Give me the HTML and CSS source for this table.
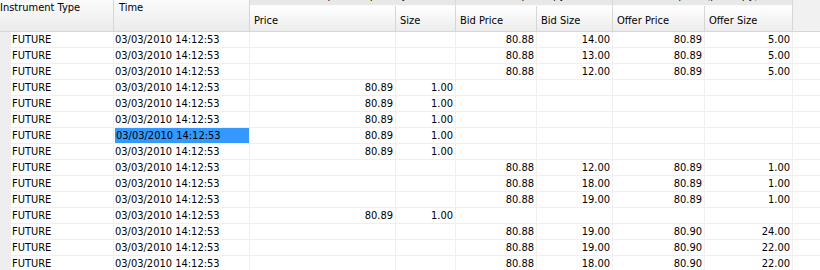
FILE: index.html
```html
<!DOCTYPE html>
<html>
<head>
<meta charset="utf-8">
<link rel="stylesheet" href="styles.css">
</head>
<body>
<div class="table">
  <div class="head">
    <div class="hm h-inst">Instrument Type</div>
    <div class="hm h-time">Time</div>
    <div class="grp g-trade"><span>Trade price &amp; quantity</span></div>
    <div class="grp g-bid"><span>Bid price/qty</span></div>
    <div class="grp g-offer"><span>Offer quote (price/qty)</span></div>
    <div class="sub s1">Price</div>
    <div class="sub s2">Size</div>
    <div class="sub s3">Bid Price</div>
    <div class="sub s4">Bid Size</div>
    <div class="sub s5">Offer Price</div>
    <div class="sub s6">Offer Size</div>
    <div class="hfill"></div>
  </div>
  <div class="body">
    <div class="gut"></div><div class="c">FUTURE</div><div class="c">03/03/2010 14:12:53</div><div class="c n"></div><div class="c n"></div><div class="c n">80.88</div><div class="c n">14.00</div><div class="c n">80.89</div><div class="c n">5.00</div><div class="fill"></div>
    <div class="gut"></div><div class="c">FUTURE</div><div class="c">03/03/2010 14:12:53</div><div class="c n"></div><div class="c n"></div><div class="c n">80.88</div><div class="c n">13.00</div><div class="c n">80.89</div><div class="c n">5.00</div><div class="fill"></div>
    <div class="gut"></div><div class="c">FUTURE</div><div class="c">03/03/2010 14:12:53</div><div class="c n"></div><div class="c n"></div><div class="c n">80.88</div><div class="c n">12.00</div><div class="c n">80.89</div><div class="c n">5.00</div><div class="fill"></div>
    <div class="gut"></div><div class="c">FUTURE</div><div class="c">03/03/2010 14:12:53</div><div class="c n">80.89</div><div class="c n">1.00</div><div class="c n"></div><div class="c n"></div><div class="c n"></div><div class="c n"></div><div class="fill"></div>
    <div class="gut"></div><div class="c">FUTURE</div><div class="c">03/03/2010 14:12:53</div><div class="c n">80.89</div><div class="c n">1.00</div><div class="c n"></div><div class="c n"></div><div class="c n"></div><div class="c n"></div><div class="fill"></div>
    <div class="gut"></div><div class="c">FUTURE</div><div class="c">03/03/2010 14:12:53</div><div class="c n">80.89</div><div class="c n">1.00</div><div class="c n"></div><div class="c n"></div><div class="c n"></div><div class="c n"></div><div class="fill"></div>
    <div class="gut"></div><div class="c">FUTURE</div><div class="c sel"><span class="selbox">03/03/2010 14:12:53</span></div><div class="c n">80.89</div><div class="c n">1.00</div><div class="c n"></div><div class="c n"></div><div class="c n"></div><div class="c n"></div><div class="fill"></div>
    <div class="gut"></div><div class="c">FUTURE</div><div class="c">03/03/2010 14:12:53</div><div class="c n">80.89</div><div class="c n">1.00</div><div class="c n"></div><div class="c n"></div><div class="c n"></div><div class="c n"></div><div class="fill"></div>
    <div class="gut"></div><div class="c">FUTURE</div><div class="c">03/03/2010 14:12:53</div><div class="c n"></div><div class="c n"></div><div class="c n">80.88</div><div class="c n">12.00</div><div class="c n">80.89</div><div class="c n">1.00</div><div class="fill"></div>
    <div class="gut"></div><div class="c">FUTURE</div><div class="c">03/03/2010 14:12:53</div><div class="c n"></div><div class="c n"></div><div class="c n">80.88</div><div class="c n">18.00</div><div class="c n">80.89</div><div class="c n">1.00</div><div class="fill"></div>
    <div class="gut"></div><div class="c">FUTURE</div><div class="c">03/03/2010 14:12:53</div><div class="c n"></div><div class="c n"></div><div class="c n">80.88</div><div class="c n">19.00</div><div class="c n">80.89</div><div class="c n">1.00</div><div class="fill"></div>
    <div class="gut"></div><div class="c">FUTURE</div><div class="c">03/03/2010 14:12:53</div><div class="c n">80.89</div><div class="c n">1.00</div><div class="c n"></div><div class="c n"></div><div class="c n"></div><div class="c n"></div><div class="fill"></div>
    <div class="gut"></div><div class="c">FUTURE</div><div class="c">03/03/2010 14:12:53</div><div class="c n"></div><div class="c n"></div><div class="c n">80.88</div><div class="c n">19.00</div><div class="c n">80.90</div><div class="c n">24.00</div><div class="fill"></div>
    <div class="gut"></div><div class="c">FUTURE</div><div class="c">03/03/2010 14:12:53</div><div class="c n"></div><div class="c n"></div><div class="c n">80.88</div><div class="c n">19.00</div><div class="c n">80.90</div><div class="c n">22.00</div><div class="fill"></div>
    <div class="gut"></div><div class="c">FUTURE</div><div class="c">03/03/2010 14:12:53</div><div class="c n"></div><div class="c n"></div><div class="c n">80.88</div><div class="c n">18.00</div><div class="c n">80.90</div><div class="c n">22.00</div><div class="fill"></div>
  </div>
</div>
</body>
</html>
```

FILE: styles.css
```css
html, body {
  margin: 0;
  padding: 0;
  background: #ffffff;
}
body {
  width: 820px;
  height: 270px;
  overflow: hidden;
  font-family: "DejaVu Sans Condensed", "DejaVu Sans", sans-serif;
  font-stretch: condensed;
  font-size: 11px;
  color: #000000;
}
.table {
  display: flex;
  flex-direction: column;
  width: 820px;
}
.head,
.body {
  display: grid;
  grid-template-columns: 11px 103px 136px 146px 60px 81px 76px 92px 88px 1fr;
}
.head {
  grid-template-rows: 6px 26px;
}
.body {
  grid-auto-rows: 16px;
}
.hm {
  grid-row: 1 / 3;
  background: linear-gradient(#fbfbfb, #ebebeb);
  border-right: 1px solid #d6d6d6;
  border-bottom: 1px solid #d6d6d6;
  padding: 1px 0 0 5px;
  line-height: 13px;
  white-space: nowrap;
  overflow: hidden;
}
.h-inst {
  grid-column: 1 / 3;
  padding-left: 0;
}
.h-time {
  grid-column: 3;
}
.grp {
  grid-row: 1;
  background: #e8e8e8;
  border-right: 1px solid #d6d6d6;
  border-bottom: 1px solid #fafafa;
  overflow: hidden;
  line-height: 13px;
  text-align: center;
  white-space: nowrap;
}
.grp span {
  display: block;
  margin-top: -11px;
}
.g-trade { grid-column: 4 / 6; }
.g-bid { grid-column: 6 / 8; }
.g-offer { grid-column: 8 / 10; }
.sub {
  grid-row: 2;
  background: linear-gradient(#ffffff, #ececec);
  border-right: 1px solid #d6d6d6;
  border-bottom: 1px solid #d6d6d6;
  padding: 8px 0 0 4px;
  line-height: 13px;
  white-space: nowrap;
  overflow: hidden;
}
.s1 { grid-column: 4; }
.s2 { grid-column: 5; }
.s3 { grid-column: 6; }
.s4 { grid-column: 7; }
.s5 { grid-column: 8; }
.s6 { grid-column: 9; }
.hfill {
  grid-column: 10;
  grid-row: 1 / 3;
  background: #f1f1f1;
  border-bottom: 1px solid #d6d6d6;
}
.gut {
  background: #eeeeee;
}
.c {
  border-right: 1px solid #efefef;
  border-bottom: 1px solid #efefef;
  padding: 0 2px 0 1px;
  line-height: 15px;
  white-space: nowrap;
  overflow: hidden;
}
.n {
  text-align: right;
}
.sel {
  padding-left: 1px;
  padding-right: 0;
}
.selbox {
  display: block;
  background: #3399ff;
  padding-left: 1px;
}
.fill {
  border-bottom: 1px solid #efefef;
}
```
